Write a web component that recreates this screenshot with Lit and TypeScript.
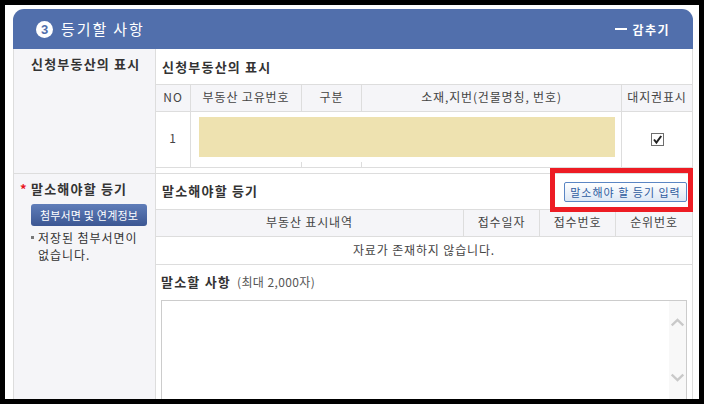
import { LitElement, html, css } from "lit";
import { customElement } from "lit/decorators.js";

@customElement("app-root")
export class AppRoot extends LitElement {
  static styles = css`
    :host {
      display: block;
      width: 704px;
      height: 404px;
      box-sizing: border-box;
      border: 5px solid #000;
      background: #fff;
      overflow: hidden;
      font-family: "Noto Sans CJK KR", "Liberation Sans", sans-serif;
      font-size: 12px;
      color: #444;
      letter-spacing: 0.85px;
    }
    .panel { position: relative; width: 680px; margin: 4px 0 0 8px; }
    .head {
      height: 40px; box-sizing: border-box; padding: 0 23px 0 23px;
      display: flex; align-items: center;
      background: #516fac; color: #fff;
      border-radius: 11px 11px 0 0;
    }
    .badge {
      width: 17px; height: 17px; border-radius: 50%; background: #fff; color: #516fac;
      display: flex; align-items: center; justify-content: center;
      font: bold 13px "Liberation Sans", sans-serif; letter-spacing: 0;
    }
    .title { margin-left: 8px; font-size: 15px; letter-spacing: 1.9px; flex: 1; line-height: 20px; }
    .hide { display: flex; align-items: center; gap: 5px; font-weight: 700; font-size: 12px; letter-spacing: 1.5px; }
    .dash { width: 12px; height: 2px; background: #fff; flex: none; }
    .row { display: grid; grid-template-columns: 143px 537px; }
    .row.first { border-bottom: 1px solid #ddd; }
    .side {
      box-sizing: border-box; background: #f5f5f8;
      border-left: 1px solid #ddd; border-right: 1px solid #ddd; padding: 5px 0 0 17px;
    }
    .label { font-weight: 700; color: #333; font-size: 13px; letter-spacing: 1.2px; line-height: 20px; }
    .req { position: relative; }
    .star { position: absolute; left: -11px; top: 0; color: #e8141c; font-weight: 700; letter-spacing: 0; }
    .main { box-sizing: border-box; border-right: 1px solid #ddd; min-width: 0; }
    .sub {
      height: 35px; box-sizing: border-box; padding: 0 5px 0 6px;
      display: flex; align-items: center; justify-content: space-between;
      font-weight: 700; font-size: 13px; color: #333; letter-spacing: 1.2px;
    }
    .sub.raised { padding-bottom: 2px; }
    .grid { display: grid; border-bottom: 1px solid #ddd; }
    .t1 { grid-template-columns: 35px 111px 60px 260px 70px; }
    .t2 { grid-template-columns: 308px 76px 76px 76px; }
    .th {
      height: 27px; box-sizing: border-box; background: #f5f5f8; padding-bottom: 3px;
      border-top: 1px solid #ddd; border-right: 1px solid #ddd;
      display: flex; align-items: center; justify-content: center; white-space: nowrap;
    }
    .grid .th:last-child { border-right: 0; }
    .bodywrap { position: relative; }
    .t1b { height: 55px; border-bottom: 1px solid #ddd; }
    .td {
      border-right: 1px solid #ddd; display: flex; align-items: center; justify-content: center;
    }
    .td:last-child { border-right: 0; }
    .td.num { padding-bottom: 4px; }
    .mask {
      position: absolute; left: 35px; top: 0; width: 430px; height: 50px;
      box-sizing: border-box; padding: 5px 6px 5px 8px; background: #fff;
    }
    .redact { height: 40px; background: #eee2b0; }
    .gap { height: 5px; }
    .empty {
      height: 27px; border-bottom: 1px solid #ddd;
      display: flex; align-items: center; justify-content: center; line-height: 23px;
    }
    .empty span { margin-top: -3px; }
    .input-btn {
      width: 123px; height: 20px; margin-top: 3px; box-sizing: border-box; padding: 0; white-space: nowrap;
      border: 1px solid #5b86c4; border-radius: 2px;
      background: linear-gradient(#ffffff, #dde8f5); color: #2f5c9f;
      display: flex; align-items: center; justify-content: center;
      font-weight: 400; font-size: 11px; letter-spacing: 1px;
    }
    .note { padding: 3px 5px 0; }
    .note-t { height: 27px; margin-bottom: 5px; display: flex; align-items: center; gap: 6px; }
    .note-t b { color: #333; font-size: 13px; letter-spacing: 1.2px; }
    .note-t span { color: #555; letter-spacing: 0.4px; }
    .area { height: 120px; box-sizing: border-box; border: 1px solid #ccc; display: flex; justify-content: flex-end; }
    .bar {
      width: 17px; background: #f8f8f8; display: flex; flex-direction: column;
      align-items: center; gap: 46px; padding-top: 17px;
    }
    .bar svg { display: block; }
    .attach {
      width: 116px; height: 22px; margin-top: 5px; border-radius: 3px; color: #fff;
      background: linear-gradient(#5f7db9, #3c5793);
      display: flex; align-items: center; justify-content: center; white-space: nowrap;
      font-size: 11px; letter-spacing: 0.2px;
    }
    .msg { position: relative; margin-top: 3px; padding-left: 7px; line-height: 17px; width: 108px; color: #333; letter-spacing: 0.95px; }
    .msg::before { content: ""; position: absolute; left: 0; top: 7px; width: 3px; height: 3px; background: #777; }
    .red {
      position: absolute; left: 537px; top: 159px; width: 143px; height: 44px;
      box-sizing: border-box; border: 5px solid #ed1c24; pointer-events: none;
    }
  `;

  render() {
    const chev = (d: string) => html`<svg width="13" height="9" viewBox="0 0 13 9"><path d=${d} fill="none" stroke="#c9c9c9" stroke-width="2.4"/></svg>`;
    return html`
      <div class="panel">
        <div class="head">
          <span class="badge">3</span>
          <span class="title">등기할 사항</span>
          <span class="hide"><span class="dash"></span>감추기</span>
        </div>
        <div class="row first">
          <div class="side"><div class="label">신청부동산의 표시</div></div>
          <div class="main">
            <div class="sub">신청부동산의 표시</div>
            <div class="grid t1">
              <div class="th">NO</div><div class="th">부동산 고유번호</div><div class="th">구분</div>
              <div class="th">소재,지번(건물명칭, 번호)</div><div class="th">대지권표시</div>
            </div>
            <div class="bodywrap">
              <div class="grid t1 t1b">
                <div class="td num">1</div><div class="td"></div><div class="td"></div><div class="td"></div>
                <div class="td">
                  <svg width="13" height="13" viewBox="0 0 13 13">
                    <rect x="0.5" y="0.5" width="12" height="12" fill="#fff" stroke="#6e6e6e"/>
                    <path d="M3 6.5 L5.4 9.5 L10.2 3" fill="none" stroke="#222" stroke-width="2"/>
                  </svg>
                </div>
              </div>
              <div class="mask"><div class="redact"></div></div>
            </div>
            <div class="gap"></div>
          </div>
        </div>
        <div class="row">
          <div class="side">
            <div class="label req"><span class="star">*</span>말소해야할 등기</div>
            <div class="attach">첨부서면 및 연계정보</div>
            <div class="msg">저장된 첨부서면이 없습니다.</div>
          </div>
          <div class="main">
            <div class="sub raised">말소해야할 등기<span class="input-btn">말소해야 할 등기 입력</span></div>
            <div class="grid t2">
              <div class="th">부동산 표시내역</div><div class="th">접수일자</div><div class="th">접수번호</div><div class="th">순위번호</div>
            </div>
            <div class="empty"><span>자료가 존재하지 않습니다.</span></div>
            <div class="note">
              <div class="note-t"><b>말소할 사항</b><span>(최대 2,000자)</span></div>
              <div class="area">
                <div class="bar">${chev("M.7 7.5 L6.5 2 L12.3 7.5")}${chev("M.7 1.5 L6.5 7 L12.3 1.5")}</div>
              </div>
            </div>
          </div>
        </div>
        <div class="red"></div>
      </div>
    `;
  }
}
